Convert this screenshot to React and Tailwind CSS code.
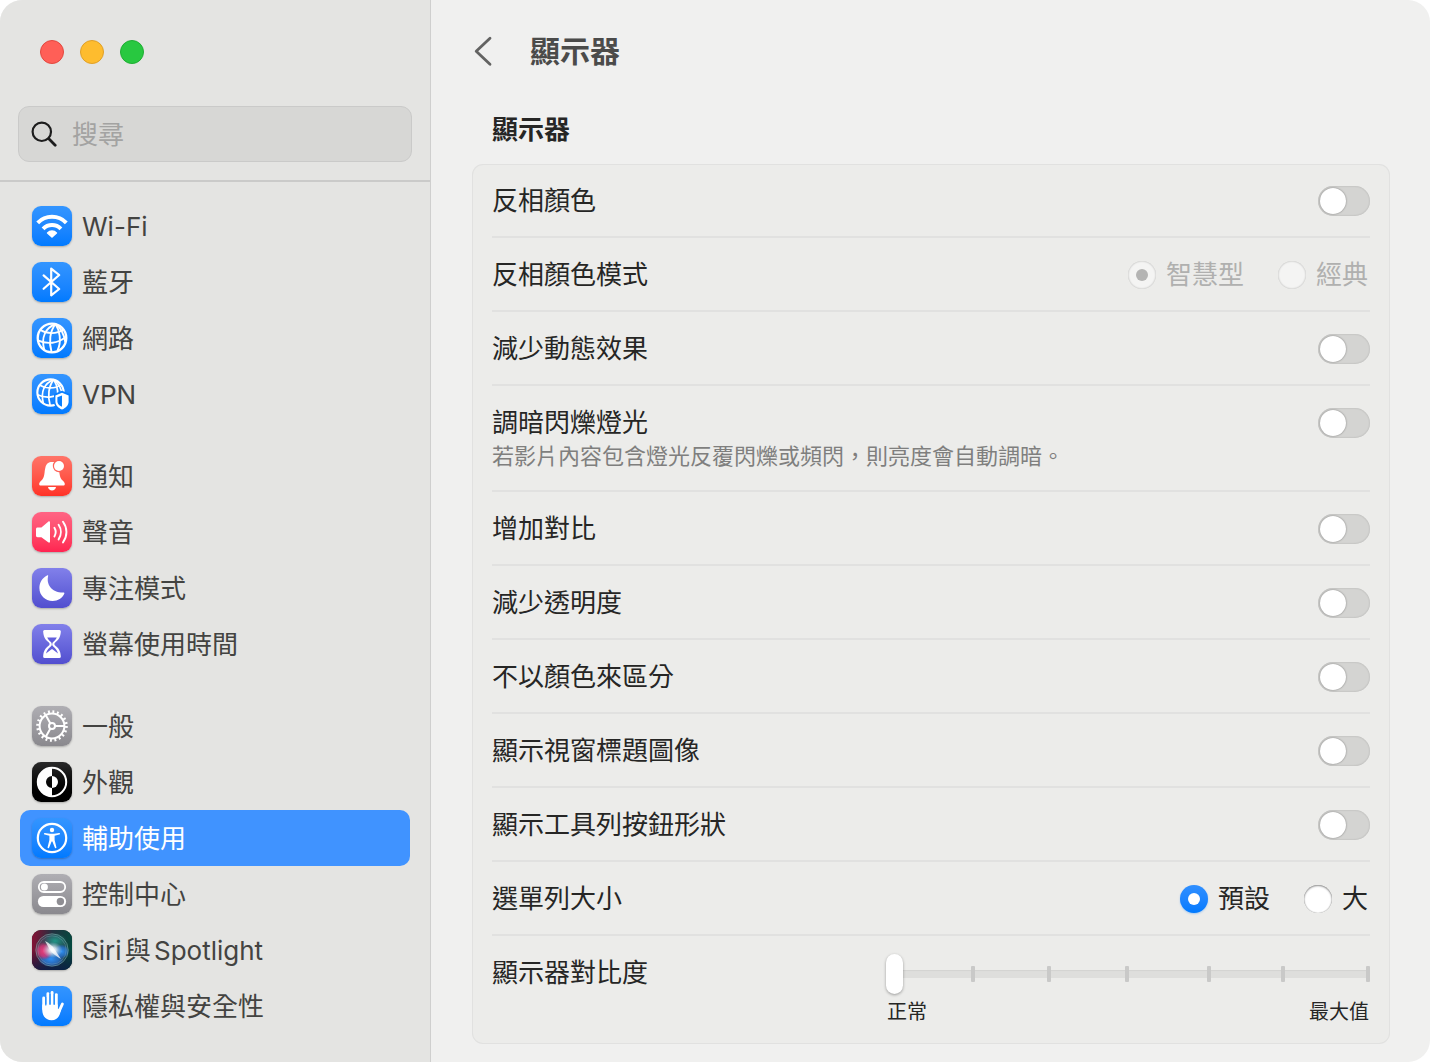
import React from "react";

function WifiIcon() {
  return (
    <g fill="none" stroke="#fff" strokeWidth="4">
      <path d="M5.7 16.8A20 20 0 0 1 34.3 16.8" />
      <path d="M11.1 22.8A12.4 12.4 0 0 1 28.9 22.8" />
      <path d="M20 31L15.6 27A6.2 6.2 0 0 1 24.4 27Z" fill="#fff" strokeWidth="1.6" strokeLinejoin="round" />
    </g>
  );
}

function BluetoothIcon() {
  return (
    <path d="M11.6 13.4L27.2 27L19.2 33.4V6.6L27.2 13L11.6 26.8" fill="none" stroke="#fff" strokeWidth="2.2" strokeLinejoin="round" strokeLinecap="round" />
  );
}

function GlobeLines() {
  return (
    <g fill="none" stroke="#fff" strokeWidth="1.9">
      <circle cx="20" cy="20" r="14.3" strokeWidth="2.3" />
      <path d="M23.5 6C13.5 10 9 19 12.2 31.8" />
      <path d="M23.5 6C18 13 16.5 24 19.6 34.2" />
      <path d="M23.5 6C27.5 12 30 23 25.4 33" />
      <path d="M23.5 6C29 10 32 16 33.4 24.4" />
      <path d="M8.4 12C15 16 24.5 16.4 31.4 11.4" />
      <path d="M5.8 22.4C15 26.6 26 25.6 34.2 18.6" />
    </g>
  );
}

function VpnIcon() {
  return (
    <>
      <g transform="translate(0.1 0.1) scale(0.92)">
        <GlobeLines />
      </g>
      <path d="M30 16.8L38 20V27.5C38 32 34.8 35.2 30 37.2C25.2 35.2 22 32 22 27.5V20Z" fill="#0a7fff" />
      <path d="M30 18.8L36.6 21.4V27.5C36.6 31.2 34 33.8 30 35.6C26 33.8 23.4 31.2 23.4 27.5V21.4Z" fill="#fff" />
      <path d="M30 21.4V32.8C27 31.4 25.4 29.8 25.4 27.3V23.2Z" fill="#0a7fff" />
    </>
  );
}

function BellIcon() {
  return (
    <>
      <path d="M20 6C23.5 6 25.6 7 26.4 10.4C27.6 15 27 21.2 30.6 24.6C31.8 25.8 32.8 26.8 32.8 28C32.8 29 32.2 29.6 31.2 29.6H8.8C7.8 29.6 7.2 29 7.2 28C7.2 26.8 8.2 25.8 9.4 24.6C13 21.2 12.2 15.6 13.4 11.4C14.4 7.6 16.5 6 20 6Z" fill="#fff" />
      <path d="M16 31H24C23.6 33.2 22 34.6 20 34.6S16.4 33.2 16 31Z" fill="#fff" />
      <circle cx="27" cy="10" r="6.2" fill="#ff6258" />
      <circle cx="27" cy="10" r="5" fill="#fff" />
    </>
  );
}

function SpeakerIcon() {
  return (
    <>
      <path d="M5.6 15.4H9.4L16.2 9.7C17.2 8.9 18 9.3 18 10.4V29.6C18 30.7 17.2 31.1 16.2 30.3L9.4 25.2H5.6C4.6 25.2 4 24.6 4 23.6V17C4 16 4.6 15.4 5.6 15.4Z" fill="#fff" />
      <g fill="none" stroke="#fff" strokeWidth="1.9" strokeLinecap="round">
        <path d="M22.4 15.8C24 18.4 24 21.8 22.4 24.4" />
        <path d="M26.6 12.8C29.6 17.2 29.6 23 26.6 27.4" />
        <path d="M31 9.8C35.6 16 35.6 24.2 31 30.4" />
      </g>
    </>
  );
}

function MoonIcon() {
  return (
    <path d="M16.2 7.8C14.2 15.6 18.6 24.6 31.4 24.6C32.2 24.6 32.6 25 32.3 25.8C30.3 30 26 33 20.6 33C13.2 33 7.4 27.4 7.4 20C7.4 14.4 10.4 9.8 15 7.4C15.8 7 16.4 7.1 16.2 7.8Z" fill="#fff" />
  );
}

function HourglassIcon() {
  return (
    <>
      <path d="M12.6 6H27.4C28.6 6 29 7 28.8 8C28.4 13 26.8 15.6 23.4 18.2C22 19.4 22 20.6 23.4 21.8C26.8 24.4 28.4 27 28.8 32C29 33 28.6 34 27.4 34H12.6C11.4 34 11 33 11.2 32C11.6 27 13.2 24.4 16.6 21.8C18 20.6 18 19.4 16.6 18.2C13.2 15.6 11.6 13 11.2 8C11 7 11.4 6 12.6 6Z" fill="#fff" />
      <path d="M15.2 13.6H24.8C24 15.4 22.6 16.8 21.2 18C20.4 18.8 20.2 19.4 20.2 21C21 23 24.6 24.4 26 29.6L20.8 25.6C20.4 25.2 19.6 25.2 19.2 25.6L14 29.6C15.4 24.4 19 23 19.8 21C19.8 19.4 19.6 18.8 18.8 18C17.4 16.8 16 15.4 15.2 13.6Z" fill="#625fdc" />
    </>
  );
}

function GearIcon() {
  return (
    <g fill="none" stroke="#fff">
      <circle cx="20" cy="20" r="14.4" strokeWidth="2.8" strokeDasharray="1.9 2.624" />
      <circle cx="20" cy="20" r="12.4" strokeWidth="2" />
      <circle cx="20" cy="20" r="3" strokeWidth="2" />
      <path d="M23 20H32.4M18.4 17.4L13.8 9.3M18.4 22.6L13.8 30.7" strokeWidth="2" />
    </g>
  );
}

function AppearanceIcon() {
  return (
    <>
      <circle cx="20" cy="20" r="14.2" fill="none" stroke="#fff" strokeWidth="2" />
      <path d="M20 5.4A14.6 14.6 0 0 0 20 34.6V26A6 6 0 0 1 20 14Z" fill="#fff" />
      <path d="M20 14A6 6 0 0 1 20 26Z" fill="#fff" />
    </>
  );
}

function AccessibilityIcon() {
  return (
    <>
      <circle cx="20" cy="20" r="14.2" fill="none" stroke="#fff" strokeWidth="2.2" />
      <circle cx="20" cy="12" r="2.2" fill="#fff" />
      <path d="M13 15C16 16 24 16 27 15C28.3 14.8 28.4 16.2 27.4 16.5L22.6 17.8V22L24.4 29.2C24.5 30.4 23.2 30.7 22.8 29.6L20.4 23.4H19.6L17.2 29.6C16.8 30.7 15.5 30.4 15.6 29.2L17.4 22V17.8L12.6 16.5C11.6 16.2 11.7 14.8 13 15Z" fill="#fff" />
    </>
  );
}

function ControlCenterIcon() {
  return (
    <>
      <rect x="6.8" y="8" width="26.4" height="10" rx="5" fill="none" stroke="#fff" strokeWidth="1.8" />
      <circle cx="12.4" cy="13" r="3.5" fill="#fff" />
      <rect x="5.9" y="22" width="28.2" height="11" rx="5.5" fill="#fff" />
      <circle cx="28.4" cy="27.5" r="3.7" fill="#8f8e93" />
    </>
  );
}

function SiriIcon() {
  return (
    <>
      <defs>
        <linearGradient id="siriBase" x1="0" y1="0" x2="1" y2="0.1">
          <stop offset="0" stopColor="#8a0f33" />
          <stop offset="0.5" stopColor="#243040" />
          <stop offset="1" stopColor="#06483f" />
        </linearGradient>
        <linearGradient id="siriShade" x1="0" y1="0" x2="0" y2="1">
          <stop offset="0.5" stopColor="#0a1030" stopOpacity="0" />
          <stop offset="1" stopColor="#0a1a48" stopOpacity="0.8" />
        </linearGradient>
        <radialGradient id="siriGlow">
          <stop offset="0" stopColor="#fff" />
          <stop offset="0.35" stopColor="#e6f4fb" stopOpacity="0.85" />
          <stop offset="1" stopColor="#a9cfe4" stopOpacity="0" />
        </radialGradient>
        <radialGradient id="siriPink">
          <stop offset="0" stopColor="#f0407f" />
          <stop offset="0.6" stopColor="#d83678" stopOpacity="0.8" />
          <stop offset="1" stopColor="#c03070" stopOpacity="0" />
        </radialGradient>
        <radialGradient id="siriBlue">
          <stop offset="0" stopColor="#2f8ff2" />
          <stop offset="0.6" stopColor="#2a78d8" stopOpacity="0.75" />
          <stop offset="1" stopColor="#2b6ff0" stopOpacity="0" />
        </radialGradient>
        <radialGradient id="siriTeal">
          <stop offset="0" stopColor="#1f9f8c" stopOpacity="0.9" />
          <stop offset="1" stopColor="#1f9a86" stopOpacity="0" />
        </radialGradient>
      </defs>
      <rect width="40" height="40" rx="9" fill="url(#siriBase)" />
      <rect width="40" height="40" rx="9" fill="url(#siriShade)" />
      <circle cx="20" cy="20" r="16" fill="#4a7a90" fillOpacity="0.3" />
      <ellipse cx="23" cy="11" rx="12" ry="8" fill="url(#siriTeal)" />
      <ellipse cx="19" cy="29" rx="13" ry="8" fill="url(#siriBlue)" />
      <ellipse cx="12" cy="21" rx="9" ry="9" fill="url(#siriPink)" />
      <ellipse cx="29.5" cy="21.5" rx="8" ry="7" fill="url(#siriBlue)" />
      <ellipse cx="20.5" cy="20" rx="10" ry="8" fill="url(#siriGlow)" />
      <path d="M13 11C17 13 20 15.5 22 18.5L29 29C24.5 26.5 20 23 18 20Z" fill="#fff" opacity="0.75" />
      <circle cx="20" cy="20" r="16.2" fill="none" stroke="#8fc3bd" strokeOpacity="0.5" strokeWidth="1" />
      <circle cx="20" cy="20" r="14.2" fill="none" stroke="#8fb7c4" strokeOpacity="0.35" strokeWidth="0.9" />
    </>
  );
}

function HandIcon() {
  return (
    <>
      <g stroke="#fff" strokeWidth="2.9" strokeLinecap="round" fill="none">
        <path d="M11.7 12V23" />
        <path d="M15.9 7.8V21" />
        <path d="M20.1 6.4V21" />
        <path d="M24.3 8.6V22" />
        <path d="M30.4 18L27.4 24.6" />
      </g>
      <path d="M10.25 18.5H25.75V22.5L29 24C27.6 30.4 25.4 34.2 19.6 34.2C13.6 34.2 10.25 29.6 10.25 24Z" fill="#fff" />
      <path d="M13.8 11V19.4M18 8V18.8M22.2 8V18.8" stroke="#238eff" strokeWidth="1.1" />
    </>
  );
}

const BLUE = "bg-linear-to-b from-[#3395ff] to-[#007aff]";
const RED = "bg-linear-to-b from-[#ff7468] to-[#ff3126]";
const PINK = "bg-linear-to-b from-[#ff6484] to-[#ff2351]";
const INDIGO = "bg-linear-to-b from-[#8280ea] to-[#524ecf]";
const GRAY = "bg-linear-to-b from-[#afaeb3] to-[#8a898e]";
const BLACK = "bg-linear-to-b from-[#2a2a2a] to-black";

const groups = [
  [
    { label: "Wi-Fi", Icon: WifiIcon, tile: BLUE },
    { label: "藍牙", Icon: BluetoothIcon, tile: BLUE },
    { label: "網路", Icon: GlobeLines, tile: BLUE },
    { label: "VPN", Icon: VpnIcon, tile: BLUE },
  ],
  [
    { label: "通知", Icon: BellIcon, tile: RED },
    { label: "聲音", Icon: SpeakerIcon, tile: PINK },
    { label: "專注模式", Icon: MoonIcon, tile: INDIGO },
    { label: "螢幕使用時間", Icon: HourglassIcon, tile: INDIGO },
  ],
  [
    { label: "一般", Icon: GearIcon, tile: GRAY },
    { label: "外觀", Icon: AppearanceIcon, tile: BLACK },
    { label: "輔助使用", Icon: AccessibilityIcon, tile: BLUE, selected: true },
    { label: "控制中心", Icon: ControlCenterIcon, tile: GRAY },
    { label: "Siri與Spotlight", Icon: SiriIcon, tile: BLACK },
    { label: "隱私權與安全性", Icon: HandIcon, tile: BLUE },
  ],
];

function SidebarItem({ label, Icon, tile, selected }) {
  return (
    <li>
      <a
        href="#"
        aria-current={selected ? "page" : undefined}
        className={`flex h-14 items-center gap-[10px] rounded-[10px] px-3 ${selected ? "bg-[#4093ff] text-white" : "text-[#434341]"}`}
      >
        <span className={`size-10 shrink-0 rounded-[9px] shadow-[0_1px_2px_rgba(0,0,0,0.25)] ${tile}`}>
          <svg viewBox="0 0 40 40" className="size-10" aria-hidden="true">
            <Icon />
          </svg>
        </span>
        <span className="pt-[2px] [text-autospace:normal]">{label}</span>
      </a>
    </li>
  );
}

function Sidebar() {
  return (
    <aside className="w-[431px] shrink-0 border-r border-[#cfcfce] bg-[#e4e4e2]">
      <div className="flex gap-4 px-10 pt-10">
        <button aria-label="關閉" className="size-6 rounded-full border border-[#e2483f] bg-[#ff5f57]" />
        <button aria-label="縮到最小" className="size-6 rounded-full border border-[#e0a028] bg-[#febc2e]" />
        <button aria-label="縮放" className="size-6 rounded-full border border-[#1fae33] bg-[#28c840]" />
      </div>
      <div className="border-b-2 border-[#cacac9] px-[18px] pt-[42px] pb-[18px]">
        <label className="flex h-14 items-center gap-[15px] rounded-[11px] border border-[#cacac9] bg-[#d7d7d5] pl-3">
          <svg viewBox="0 0 26 26" className="size-[26px] shrink-0" fill="none" stroke="#1d1d1d" strokeLinecap="round" aria-hidden="true">
            <circle cx="10.8" cy="10.8" r="9.2" strokeWidth="2.2" />
            <path d="M17.8 17.8L24.2 24.2" strokeWidth="2.8" />
          </svg>
          <input type="search" aria-label="搜尋" placeholder="搜尋" className="min-w-0 flex-1 bg-transparent pt-[2px] outline-none placeholder:text-[#a3a3a2]" />
        </label>
      </div>
      <nav className="flex flex-col gap-[26px] px-5 py-4">
        {groups.map((items, i) => (
          <ul key={i}>
            {items.map((item) => (
              <SidebarItem key={item.label} {...item} />
            ))}
          </ul>
        ))}
      </nav>
    </aside>
  );
}

function Switch({ id }) {
  return (
    <input
      id={id}
      type="checkbox"
      role="switch"
      className="flex h-[30px] w-[52px] shrink-0 appearance-none items-center rounded-full bg-[#d4d4d2] p-[2px] shadow-[inset_0_0_2px_rgba(0,0,0,0.2)] before:size-[26px] before:rounded-full before:bg-white before:shadow-[0_0_2px_rgba(0,0,0,0.45)] before:content-[''] checked:justify-end checked:bg-[#007aff]"
    />
  );
}

function SwitchRow({ id, label, note }) {
  return (
    <div className="border-b-2 border-[#e1e1e0] pt-[18px] pb-4">
      <div className="flex items-center justify-between">
        <label htmlFor={id} className="leading-[38px]">{label}</label>
        <Switch id={id} />
      </div>
      {note && <p className="pb-1 text-[22px] leading-7 text-[#7f7f7e]">{note}</p>}
    </div>
  );
}

function Radio({ name, label, checked, disabled }) {
  return (
    <label className={`flex items-center gap-[10px] ${disabled ? "text-[#b0b0af]" : ""}`}>
      <input
        type="radio"
        name={name}
        defaultChecked={checked}
        disabled={disabled}
        className="grid size-7 appearance-none place-items-center rounded-full bg-white shadow-[inset_0_1px_2px_rgba(0,0,0,0.4),inset_0_0_1px_rgba(0,0,0,0.4)] before:size-3 before:rounded-full checked:bg-linear-to-b checked:from-[#2f8fff] checked:to-[#007aff] checked:shadow-[0_1px_2px_rgba(0,122,255,0.3)] checked:before:bg-white checked:before:content-[''] disabled:bg-[#f4f4f3] disabled:bg-none disabled:shadow-[inset_0_0_2px_rgba(0,0,0,0.3)] disabled:checked:before:bg-[#b4b4b3]"
      />
      {label}
    </label>
  );
}

function RadioRow({ name, label, options, disabled }) {
  return (
    <div
      role="radiogroup"
      aria-labelledby={`${name}-label`}
      className="flex items-center justify-between border-b-2 border-[#e1e1e0] pt-[18px] pb-4 leading-[38px]"
    >
      <span id={`${name}-label`}>{label}</span>
      <div className="flex gap-[34px] pr-[2px]">
        {options.map((option, i) => (
          <Radio key={option} name={name} label={option} checked={i === 0} disabled={disabled} />
        ))}
      </div>
    </div>
  );
}

const ticks = [17.5, 33.3, 49.4, 66.3, 81.6];

function ContrastRow() {
  return (
    <div className="flex items-start justify-between pt-[18px] pb-[14px]">
      <label htmlFor="contrast" className="leading-[38px]">顯示器對比度</label>
      <div className="w-[484px]">
        <div className="relative flex h-10 items-center">
          <div className="ml-2 h-2 flex-1 rounded-l-full bg-[#dededc] shadow-[inset_0_1px_1px_rgba(0,0,0,0.05)]" />
          {ticks.map((t) => (
            <span key={t} className="absolute top-3 h-4 w-1 rounded-[1px] bg-[#c9c9c8]" style={{ left: `${t}%` }} />
          ))}
          <span className="absolute top-3 right-0 h-4 w-1 rounded-[1px] bg-[#c9c9c8]" />
          <input
            id="contrast"
            type="range"
            min="0"
            max="100"
            defaultValue="0"
            className="absolute inset-0 h-10 w-full appearance-none bg-transparent [&::-webkit-slider-thumb]:h-10 [&::-webkit-slider-thumb]:w-[17px] [&::-webkit-slider-thumb]:appearance-none [&::-webkit-slider-thumb]:rounded-full [&::-webkit-slider-thumb]:bg-white [&::-webkit-slider-thumb]:shadow-[0_1px_3px_rgba(0,0,0,0.35)]"
          />
        </div>
        <div className="flex justify-between px-px text-[20px] leading-9">
          <span>正常</span>
          <span>最大值</span>
        </div>
      </div>
    </div>
  );
}

export default function App() {
  return (
    <div className="min-h-screen bg-white">
      <div className="flex min-h-screen overflow-hidden rounded-[22px] bg-[#f0f0ef] font-['Inter','Noto_Sans_CJK_TC',sans-serif] text-[26px] leading-[38px] text-[#262625]" lang="zh-Hant">
        <Sidebar />
        <main className="min-w-0 flex-1 pt-7 pr-10 pb-[18px] pl-[41px]">
          <header className="flex items-center gap-9">
            <button aria-label="返回" className="flex h-12 w-[22px] items-center">
              <svg viewBox="0 0 22 32" className="h-8 w-[22px]" fill="none" stroke="#636362" strokeWidth="2.8" strokeLinecap="round" strokeLinejoin="round" aria-hidden="true">
                <path d="M18 2.2L4.2 15.2L18 28.2" />
              </svg>
            </button>
            <h1 className="pb-[2px] text-[30px] leading-[46px] font-bold text-[#4b4b4a]">顯示器</h1>
          </header>
          <h2 className="mt-[35px] px-5 font-bold">顯示器</h2>
          <section className="mt-[15px] rounded-[11px] bg-[#ececea] px-5 shadow-[inset_0_0_0_1px_#e1e1e0]">
            <SwitchRow id="invert" label="反相顏色" />
            <RadioRow name="invert-mode" label="反相顏色模式" options={["智慧型", "經典"]} disabled />
            <SwitchRow id="motion" label="減少動態效果" />
            <SwitchRow id="flash" label="調暗閃爍燈光" note="若影片內容包含燈光反覆閃爍或頻閃，則亮度會自動調暗。" />
            <SwitchRow id="increase-contrast" label="增加對比" />
            <SwitchRow id="transparency" label="減少透明度" />
            <SwitchRow id="differentiate" label="不以顏色來區分" />
            <SwitchRow id="title-icons" label="顯示視窗標題圖像" />
            <SwitchRow id="toolbar-shapes" label="顯示工具列按鈕形狀" />
            <RadioRow name="menu-size" label="選單列大小" options={["預設", "大"]} />
            <ContrastRow />
          </section>
        </main>
      </div>
    </div>
  );
}
